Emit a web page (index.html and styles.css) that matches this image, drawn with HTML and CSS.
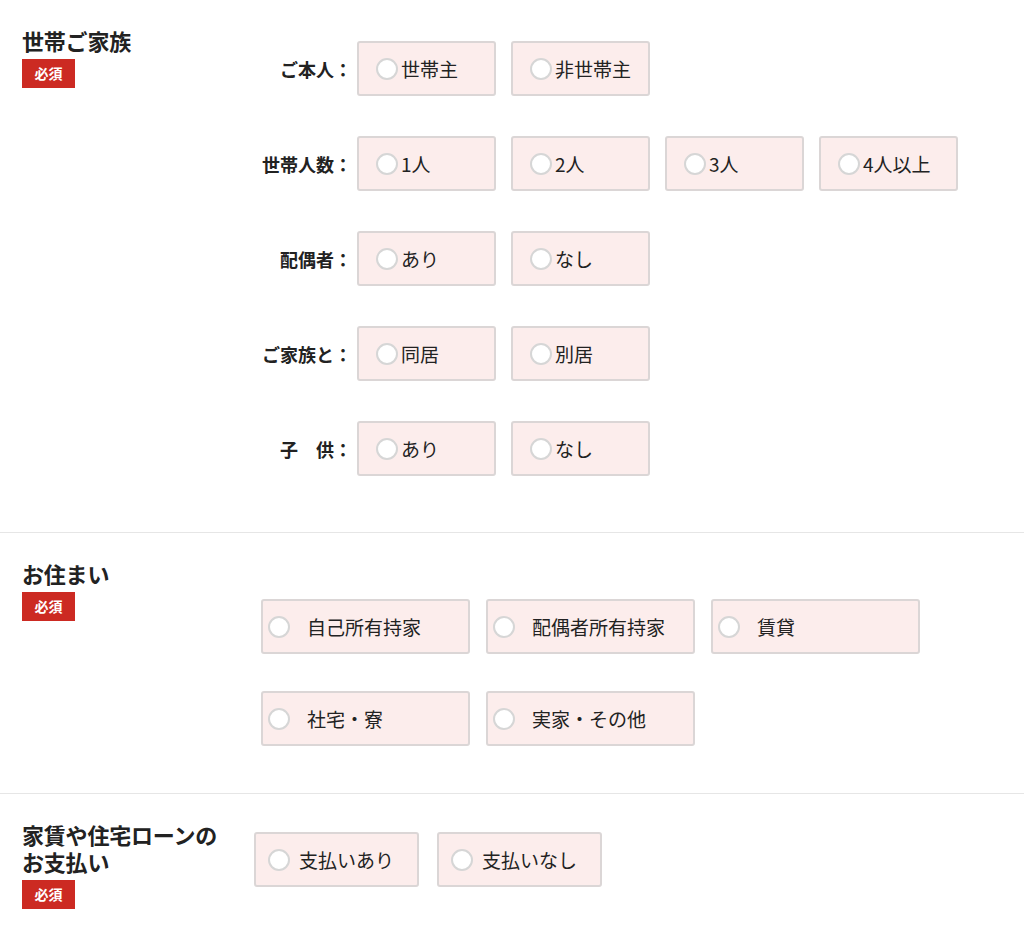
FILE: index.html
```html
<!DOCTYPE html>
<html lang="ja">
<head>
<meta charset="utf-8">
<title>フォーム</title>
<link rel="stylesheet" href="styles.css">
</head>
<body>
<section class="section section--family">
  <div class="head">
    <h2 class="title">世帯ご家族</h2>
    <span class="badge">必須</span>
  </div>
  <div class="body body--family">
    <div class="row">
      <span class="row-label">ご本人：</span>
      <label class="opt opt--sm"><input type="radio" name="self"><span>世帯主</span></label>
      <label class="opt opt--sm"><input type="radio" name="self"><span>非世帯主</span></label>
    </div>
    <div class="row">
      <span class="row-label">世帯人数：</span>
      <label class="opt opt--sm"><input type="radio" name="num"><span>1人</span></label>
      <label class="opt opt--sm"><input type="radio" name="num"><span>2人</span></label>
      <label class="opt opt--sm"><input type="radio" name="num"><span>3人</span></label>
      <label class="opt opt--sm"><input type="radio" name="num"><span>4人以上</span></label>
    </div>
    <div class="row">
      <span class="row-label">配偶者：</span>
      <label class="opt opt--sm"><input type="radio" name="spouse"><span>あり</span></label>
      <label class="opt opt--sm"><input type="radio" name="spouse"><span>なし</span></label>
    </div>
    <div class="row">
      <span class="row-label">ご家族と：</span>
      <label class="opt opt--sm"><input type="radio" name="live"><span>同居</span></label>
      <label class="opt opt--sm"><input type="radio" name="live"><span>別居</span></label>
    </div>
    <div class="row">
      <span class="row-label">子　供：</span>
      <label class="opt opt--sm"><input type="radio" name="child"><span>あり</span></label>
      <label class="opt opt--sm"><input type="radio" name="child"><span>なし</span></label>
    </div>
  </div>
</section>

<section class="section section--home">
  <div class="head">
    <h2 class="title">お住まい</h2>
    <span class="badge">必須</span>
  </div>
  <div class="body body--home">
    <label class="opt opt--wide"><input type="radio" name="home"><span>自己所有持家</span></label>
    <label class="opt opt--wide"><input type="radio" name="home"><span>配偶者所有持家</span></label>
    <label class="opt opt--wide"><input type="radio" name="home"><span>賃貸</span></label>
    <label class="opt opt--wide"><input type="radio" name="home"><span>社宅・寮</span></label>
    <label class="opt opt--wide"><input type="radio" name="home"><span>実家・その他</span></label>
  </div>
</section>

<section class="section section--pay">
  <div class="head">
    <h2 class="title title--two">
      <span class="title-line">家賃や住宅ローンの</span>
      <span class="title-line">お支払い</span>
    </h2>
    <span class="badge">必須</span>
  </div>
  <div class="body body--pay">
    <label class="opt opt--pay"><input type="radio" name="pay"><span>支払いあり</span></label>
    <label class="opt opt--pay"><input type="radio" name="pay"><span>支払いなし</span></label>
  </div>
</section>
</body>
</html>
```

FILE: styles.css
```css
html, body {
  margin: 0;
  padding: 0;
  background: #ffffff;
}

body {
  font-family: "Noto Sans CJK JP", "Noto Sans", sans-serif;
  color: #222222;
}

.section {
  display: flex;
  align-items: flex-start;
  padding: 27px 0 0 22px;
  border-bottom: 1px solid #e6e6e6;
}

.section--family { padding-bottom: 56px; }
.section--home { padding-bottom: 47px; }
.section--pay { border-bottom: none; padding-bottom: 30px; }

.head {
  width: 230px;
  flex: none;
}

.title {
  margin: 0;
  font-size: 22px;
  font-weight: 700;
  line-height: 27px;
  color: #222222;
  letter-spacing: -0.2px;
}

.title--two {
  display: flex;
  flex-direction: column;
  gap: 0;
}

.title-line {
  display: block;
  height: 27px;
  line-height: 27px;
  overflow: visible;
}

.badge {
  display: inline-block;
  margin-top: 5px;
  width: 53px;
  height: 29px;
  line-height: 29px;
  text-align: center;
  background: #cc2a22;
  color: #ffffff;
  font-size: 14px;
  font-weight: 700;
}

.body--family {
  margin-top: 14px;
  display: flex;
  flex-direction: column;
  gap: 40px;
}

.row {
  display: flex;
  align-items: center;
  gap: 15px;
}

.row-label {
  width: 100px;
  margin-right: -10px;
  text-align: right;
  font-size: 18px;
  font-weight: 700;
  white-space: nowrap;
  color: #222222;
}

.body--home {
  margin-top: 39px;
  margin-left: 9px;
  display: grid;
  grid-template-columns: repeat(3, 209px);
  column-gap: 16px;
  row-gap: 37px;
}

.body--pay {
  margin-top: 11px;
  margin-left: 2px;
  display: flex;
  gap: 18px;
}

.opt {
  box-sizing: border-box;
  height: 55px;
  display: flex;
  align-items: center;
  background: #fcedec;
  border: 2px solid #dbd6d6;
  border-radius: 3px;
  font-size: 19px;
  color: #222222;
  cursor: pointer;
}

.opt input {
  appearance: none;
  -webkit-appearance: none;
  margin: 0;
  flex: none;
  width: 22px;
  height: 22px;
  border-radius: 50%;
  background: #ffffff;
  border: 2px solid #d6d6d6;
  box-sizing: border-box;
}

.opt--sm {
  width: 139px;
  padding-left: 17px;
}
.opt--sm input { margin-right: 3px; }

.opt--wide {
  width: 209px;
  padding-left: 5px;
}
.opt--wide input { margin-right: 17px; }

.opt--pay {
  width: 165px;
  padding-left: 12px;
}
.opt--pay input { margin-right: 9px; }
```
